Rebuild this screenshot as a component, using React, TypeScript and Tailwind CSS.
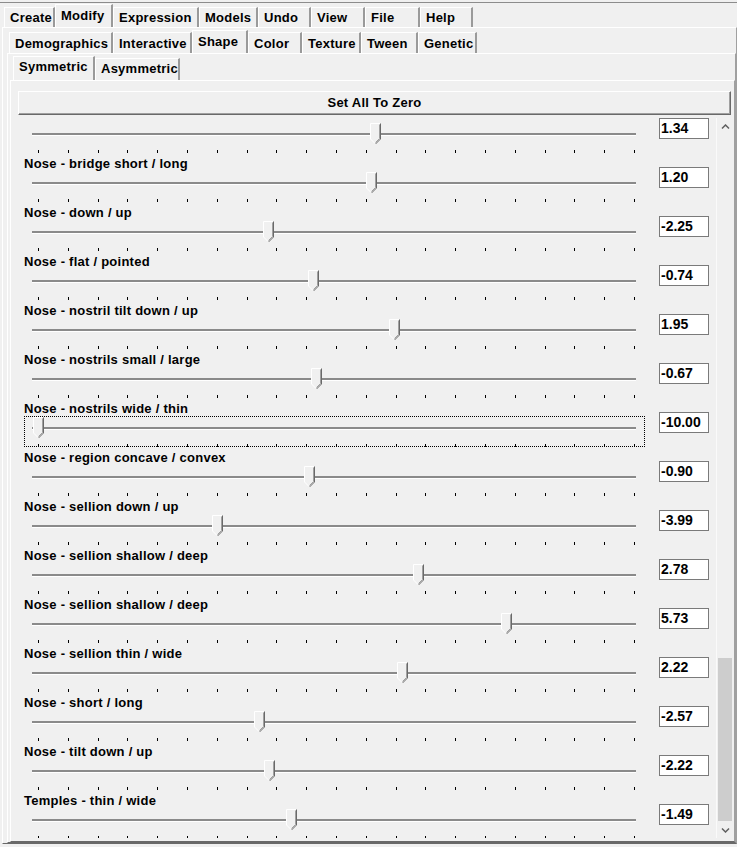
import type { FC } from 'react';

interface TabProps {
  label: string;
  width: number;
  selected?: boolean;
  row: 1 | 2 | 3;
}

const tabHeights = {
  1: { off: 'h-[20px] pt-[2px]', on: 'h-[23px] pt-[3px]' },
  2: { off: 'h-[21px] pt-[3px]', on: 'h-[23px] pt-[3px]' },
  3: { off: 'h-[22px] pt-[2px]', on: 'h-[24px] pt-[2px]' },
};

const Tab: FC<TabProps> = ({ label, width, selected, row }) => (
  <div
    style={{ width }}
    className={`shrink-0 pl-[5px] text-left leading-[16px] border-l border-t border-white border-r-2 border-r-[#9a9a9a] ${
      selected ? tabHeights[row].on : tabHeights[row].off
    }`}
  >
    {label}
  </div>
);

interface SliderItem {
  label: string;
  value: number;
  focused?: boolean;
}

const items: SliderItem[] = [
  { label: '', value: 1.34 },
  { label: 'Nose - bridge short / long', value: 1.2 },
  { label: 'Nose - down / up', value: -2.25 },
  { label: 'Nose - flat / pointed', value: -0.74 },
  { label: 'Nose - nostril tilt down / up', value: 1.95 },
  { label: 'Nose - nostrils small / large', value: -0.67 },
  { label: 'Nose - nostrils wide / thin', value: -10, focused: true },
  { label: 'Nose - region concave / convex', value: -0.9 },
  { label: 'Nose - sellion down / up', value: -3.99 },
  { label: 'Nose - sellion shallow / deep', value: 2.78 },
  { label: 'Nose - sellion shallow / deep', value: 5.73 },
  { label: 'Nose - sellion thin / wide', value: 2.22 },
  { label: 'Nose - short / long', value: -2.57 },
  { label: 'Nose - tilt down / up', value: -2.22 },
  { label: 'Temples - thin / wide', value: -1.49 },
];

const Thumb: FC<{ left: number }> = ({ left }) => (
  <svg
    width="11"
    height="22"
    viewBox="0 0 11 22"
    className="absolute top-[0px]"
    style={{ left }}
  >
    <path d="M0.5 0.5 H10.5 V16 L5.5 21 L0.5 16 Z" fill="#f0f0f0" />
    <path d="M0.5 16 V0.5 H10" stroke="#ffffff" fill="none" />
    <path d="M10.5 0.5 V16 L5.5 21" stroke="#696969" fill="none" />
    <path d="M9.5 1.5 V15.5 L5.5 19.5" stroke="#a0a0a0" fill="none" />
    <path d="M0.5 16 L5 20.5" stroke="#ffffff" fill="none" />
  </svg>
);

const Row: FC<{ item: SliderItem }> = ({ item }) => {
  // thumb centre on screen = 336 + 29.8 * value; region starts at x 24
  const left = Math.round(336 + 29.8 * item.value - 24 - 1 - 5.5);
  return (
    <div className="flex h-[49px] shrink-0">
      <div className="w-[627px] pl-[6px] flex flex-col">
        <div className="h-[16px] leading-[18px] tracking-[0.25px] whitespace-nowrap">
          {item.label}
        </div>
        <div
          className={`relative w-[621px] h-[31px] border border-dotted ${
            item.focused ? 'border-black' : 'border-transparent'
          }`}
        >
          <div className="mt-[10px] ml-[7px] w-[604px] h-[3px] bg-[#8a8a8a] border-b border-white" />
          <div className="mt-[14px] ml-[13px] w-[597px] h-[3px] flex justify-between">
            {Array.from({ length: 21 }).map((_, i) => (
              <div key={i} className="w-[1px] h-[3px] bg-black" />
            ))}
          </div>
          <Thumb left={left} />
        </div>
      </div>
      <div className="ml-[14px] mt-[12px] w-[50px] h-[21px] border border-[#7a7a7a] bg-white text-[14px] leading-[19px] pl-[1px]">
        {item.value.toFixed(2)}
      </div>
    </div>
  );
};

const Chevron: FC<{ down?: boolean }> = ({ down }) => (
  <svg width="9" height="6" viewBox="0 0 9 6">
    <path
      d={down ? 'M1 1.5 L4.5 5 L8 1.5' : 'M1 4.5 L4.5 1 L8 4.5'}
      stroke="#606060"
      strokeWidth="1.5"
      fill="none"
    />
  </svg>
);

const App: FC = () => (
  <div className="w-[737px] h-[847px] bg-[#f0f0f0] overflow-hidden pt-[2px] font-['Liberation_Sans',Arial,sans-serif] font-bold text-[13px] text-black">
    <div className="border-t border-[#8c8c8c]">
      <div className="flex items-end h-[24px] pl-[4px] tracking-[0.25px]">
        <Tab row={1} label="Create" width={51} />
        <Tab row={1} label="Modify" width={58} selected />
        <Tab row={1} label="Expression" width={86} />
        <Tab row={1} label="Models" width={59} />
        <Tab row={1} label="Undo" width={53} />
        <Tab row={1} label="View" width={54} />
        <Tab row={1} label="File" width={55} />
        <Tab row={1} label="Help" width={53} />
      </div>
      <div className="ml-[2px] border-l border-t border-white border-r border-r-[#a0a0a0] border-b border-b-[#696969]">
        <div className="flex items-end h-[25px] pl-[6px] tracking-[0.25px]">
          <Tab row={2} label="Demographics" width={104} />
          <Tab row={2} label="Interactive" width={79} />
          <Tab row={2} label="Shape" width={56} selected />
          <Tab row={2} label="Color" width={54} />
          <Tab row={2} label="Texture" width={59} />
          <Tab row={2} label="Tween" width={57} />
          <Tab row={2} label="Genetic" width={59} />
        </div>
        <div className="ml-[4px] border-l border-t border-white border-r border-r-[#a0a0a0] border-b border-b-[#696969]">
          <div className="flex items-end h-[26px] pl-[5px] tracking-[0.25px]">
            <Tab row={3} label="Symmetric" width={82} selected />
            <Tab row={3} label="Asymmetric" width={85} />
          </div>
          <div className="ml-[2px] border-l border-t border-white border-r border-r-[#a0a0a0] border-b border-b-[#696969] pl-[7px] pr-[1px] pt-[10px] pb-[3px]">
            <button className="w-[713px] h-[24px] border border-white border-r-[#696969] border-b-[#696969] shadow-[inset_-1px_-1px_0_#a0a0a0] text-center leading-[20px] tracking-[0.25px]">
              Set All To Zero
            </button>
            <div className="mt-[3px] h-[720px] flex overflow-hidden">
              <div className="w-[698px] flex flex-col -mt-[12px]">
                {items.map((item, i) => (
                  <Row key={i} item={item} />
                ))}
              </div>
              <div className="w-[17px] flex flex-col border-l border-[#fafafa]">
                <div className="h-[17px] flex items-center justify-center">
                  <Chevron />
                </div>
                <div className="flex-1 flex flex-col justify-end">
                  <div className="h-[163px] mx-[1px] bg-[#cdcdcd]" />
                </div>
                <div className="h-[17px] flex items-center justify-center">
                  <Chevron down />
                </div>
              </div>
            </div>
          </div>
        </div>
      </div>
    </div>
  </div>
);

export default App;
